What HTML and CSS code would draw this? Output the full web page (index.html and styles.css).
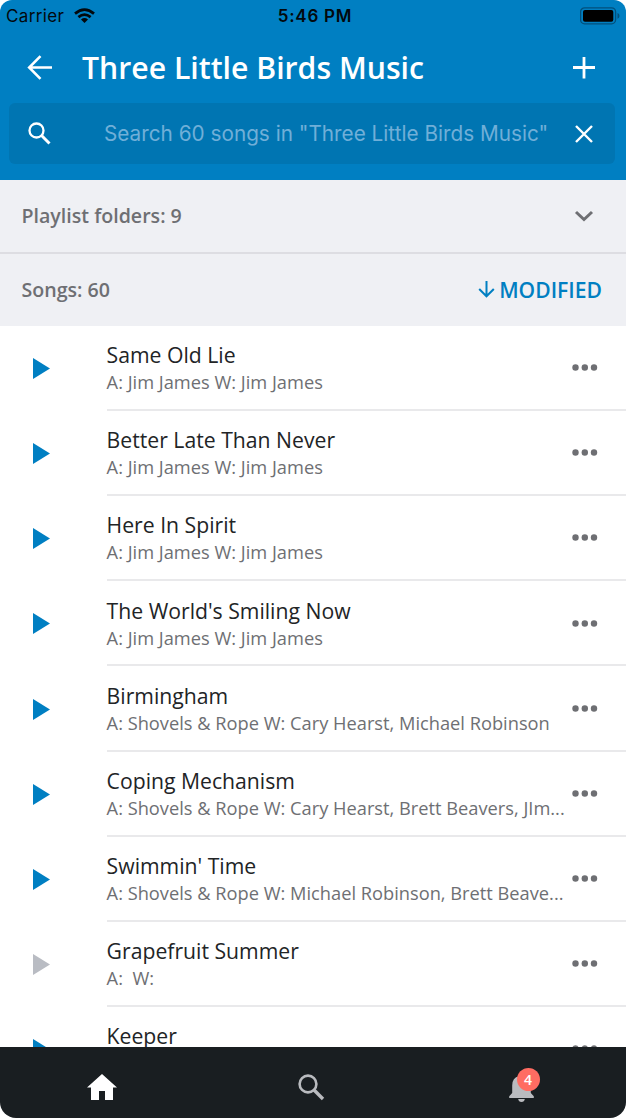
FILE: index.html
```html
<!DOCTYPE html>
<html lang="en">
<head>
<meta charset="utf-8">
<title>Three Little Birds Music</title>
<link rel="stylesheet" href="styles.css">
</head>
<body>
<main class="phone">
  <header class="header">
    <div class="status">
      <div class="carrier"><span>Carrier</span>
        <svg width="21" height="15" viewBox="0 0 21 15"><g fill="none" stroke="#03090d" stroke-width="2.7"><path d="M1 5.6Q10.5 -2.4 20 5.6"/><path d="M4.4 9.1Q10.5 4 16.6 9.1"/></g><path d="M7 11.5Q10.500 8.700 14 11.500L10.500 15Z" fill="#03090d"/></svg>
      </div>
      <span class="clock">5:46 PM</span>
      <svg class="battery" width="40" height="18" viewBox="0 0 40 18"><rect x=".6" y=".8" width="35" height="16" rx="4" fill="none" stroke="#02507c" stroke-width="1.300"/><rect x="3" y="3" width="30.300" height="11.700" rx="2" fill="#000"/><path d="M37.500 6Q39.500 6.800 39.500 8.900Q39.500 11 37.500 11.800Z" fill="#02507c"/></svg>
    </div>
    <div class="titlebar">
      <svg class="back" width="26" height="26" viewBox="0 0 26 26"><path d="M25 12.500H2.500M13.500 1.200L2.200 12.500L13.500 23.800" fill="none" stroke="#fff" stroke-width="2.600"/></svg>
      <h1 class="title">Three Little Birds Music</h1>
      <svg width="22" height="22" viewBox="0 0 22 22"><path d="M11 0V21.500M0 10.500H22" stroke="#fff" stroke-width="2.800"/></svg>
    </div>
    <div class="search">
      <svg width="24" height="24" viewBox="0 0 24 24"><circle cx="8.500" cy="8.500" r="7" fill="none" stroke="#fff" stroke-width="2.300"/><path d="M13.300 13.300L21.500 21.500" stroke="#fff" stroke-width="3"/></svg>
      <span class="placeholder">Search 60 songs in "Three Little Birds Music"</span>
      <svg width="18" height="18" viewBox="0 0 18 18"><path d="M1 1L17 17M17 1L1 17" stroke="#fff" stroke-width="2.400"/></svg>
    </div>
  </header>
  <section class="bar folders"><span class="label">Playlist folders: 9</span>
    <svg width="20" height="12" viewBox="0 0 20 12"><path d="M2 2L10 9.500L18 2" fill="none" stroke="#6e6f73" stroke-width="3"/></svg>
  </section>
  <section class="bar songs"><span class="label">Songs: 60</span>
    <span class="sort"><svg width="17" height="17" viewBox="0 0 17 17"><path d="M8.500 0V15M1.200 8L8.500 15.300L15.800 8" fill="none" stroke="#007fc2" stroke-width="2"/></svg><span>MODIFIED</span></span>
  </section>
  <ul class="list" id="list"></ul>
  <nav class="tabs">
    <svg class="home" width="30" height="26" viewBox="0 0 30 26"><path d="M15 0L30 13.500H26V26H18V17H12V26H4V13.500H0Z" fill="#fff"/></svg>
    <svg class="find" width="27" height="27" viewBox="0 0 27 27"><circle cx="10" cy="10" r="8.400" fill="none" stroke="#b9bbbf" stroke-width="2.600"/><path d="M15.300 15.300L25 25" stroke="#b9bbbf" stroke-width="3.400"/></svg>
    <div class="alerts">
      <svg width="25" height="28" viewBox="0 0 25 28"><path d="M3.200 19V11.500Q3.200 3.700 10 2.300Q10.300 0 12.500 0Q14.700 0 15 2.300Q21.800 3.700 21.800 11.500V19L24.800 22.300V24H.2V22.300Z" fill="#b9bbbf"/><path d="M9.200 25H15.800Q15.400 28 12.500 28Q9.600 28 9.200 25Z" fill="#b9bbbf"/></svg>
      <span class="badge">4</span>
    </div>
  </nav>
</main>
<script src="app.js"></script>
</body>
</html>
```
FILE: styles.css
```css
* { box-sizing: border-box; }
body { margin: 0; background: #fff; font-family: "Open Sans", sans-serif; }
svg { display: block; flex: none; }
.phone { width: 626px; height: 1118px; border-radius: 12px 12px 16px 16px; overflow: hidden; background: #fff; display: flex; flex-direction: column; }
.header { height: 180px; flex: none; background: #007fc2; padding: 0 12px 0 9px; }
.status { height: 32px; margin: 0 -6px 0 -3px; display: grid; grid-template-columns: 1fr auto 1fr; align-items: center; font: 17px/32px Inter, sans-serif; color: #03090d; }
.carrier { display: flex; align-items: center; gap: 10px; letter-spacing: .35px; }
.carrier svg { margin-top: -1px; }
.clock { font-weight: 600; letter-spacing: .75px; padding-left: 4px; }
.battery { justify-self: end; margin-top: -1px; }
.titlebar { height: 71px; display: flex; align-items: center; padding: 0 19px 0 18px; color: #fff; }
.title { flex: 1; margin: 0 0 0 29px; font-size: 30.2px; line-height: 40px; font-weight: 600; white-space: nowrap; }
.search { width: 606px; height: 61px; border-radius: 6px; background: #0075b2; display: flex; align-items: center; padding: 0 22px 0 19px; }
.placeholder { flex: 1; margin: 1px 0 0 52px; font: 20.75px/30px Inter, sans-serif; color: #70afd8; white-space: nowrap; }
.bar { flex: none; background: #eff0f4; display: flex; align-items: center; justify-content: space-between; }
.folders { height: 74px; padding: 0 32px 0 21.500px; border-bottom: 2px solid #dddde2; }
.songs { height: 71.6px; padding: 0 24px 0 21.500px; }
.label { font-size: 19.6px; line-height: 26px; font-weight: 600; color: #6e6f73; }
.sort { display: flex; align-items: center; gap: 4px; color: #007fc2; font-size: 21.1px; line-height: 28px; font-weight: 600; }
.list { list-style: none; margin: 0; padding: 0; flex: 1; min-height: 0; overflow: hidden; }
.row { height: 85.2px; display: flex; }
.play { margin: 32.300px 56.600px 0 33px; fill: #007fc2; }
.play.off { fill: #b9bcc3; }
.song { flex: 1; min-width: 0; display: flex; justify-content: space-between; padding: 14.400px 28px 0 0; border-bottom: 2px solid #e9e9eb; }
.text { width: 459px; white-space: nowrap; }
.name { font-size: 21.2px; line-height: 30px; color: #222426; }
.credit { font-size: 18.25px; line-height: 24px; color: #6e6f73; white-space: pre; }
.more { margin-top: 24px; fill: #6e6f73; }
.tabs { height: 71px; flex: none; background: #191e21; display: flex; justify-content: space-between; align-items: center; padding: 9px 92px 0 87px; }
.find { margin-right: 3px; }
.alerts { position: relative; margin-top: 2px; }
.badge { position: absolute; left: 7.500px; top: -6px; width: 23px; height: 23px; border-radius: 50%; background: #ff6c62; color: #fff; font-size: 14px; font-weight: 600; line-height: 23px; text-align: center; }
```
FILE: app.js
```javascript
const songs = [
  ["Same Old Lie", "A: Jim James W: Jim James"],
  ["Better Late Than Never", "A: Jim James W: Jim James"],
  ["Here In Spirit", "A: Jim James W: Jim James"],
  ["The World's Smiling Now", "A: Jim James W: Jim James"],
  ["Birmingham", "A: Shovels & Rope W: Cary Hearst, Michael Robinson"],
  ["Coping Mechanism", "A: Shovels & Rope W: Cary Hearst, Brett Beavers, JIm..."],
  ["Swimmin' Time", "A: Shovels & Rope W: Michael Robinson, Brett Beave..."],
  ["Grapefruit Summer", "A:  W:", true],
  ["Keeper", ""]
];
document.getElementById("list").innerHTML = songs.map(([name, credit, off]) => `
  <li class="row">
    <svg class="play${off ? " off" : ""}" width="17" height="21" viewBox="0 0 17 21"><path d="M0 0L17 10.500L0 21Z"/></svg>
    <div class="song">
      <div class="text"><div class="name">${name}</div><div class="credit">${credit.replace("&", "&amp;")}</div></div>
      <svg class="more" width="26" height="7" viewBox="0 0 26 7"><circle cx="3.500" cy="3.500" r="3.200"/><circle cx="12.800" cy="3.500" r="3.200"/><circle cx="22" cy="3.500" r="3.200"/></svg>
    </div>
  </li>`).join("");
```
